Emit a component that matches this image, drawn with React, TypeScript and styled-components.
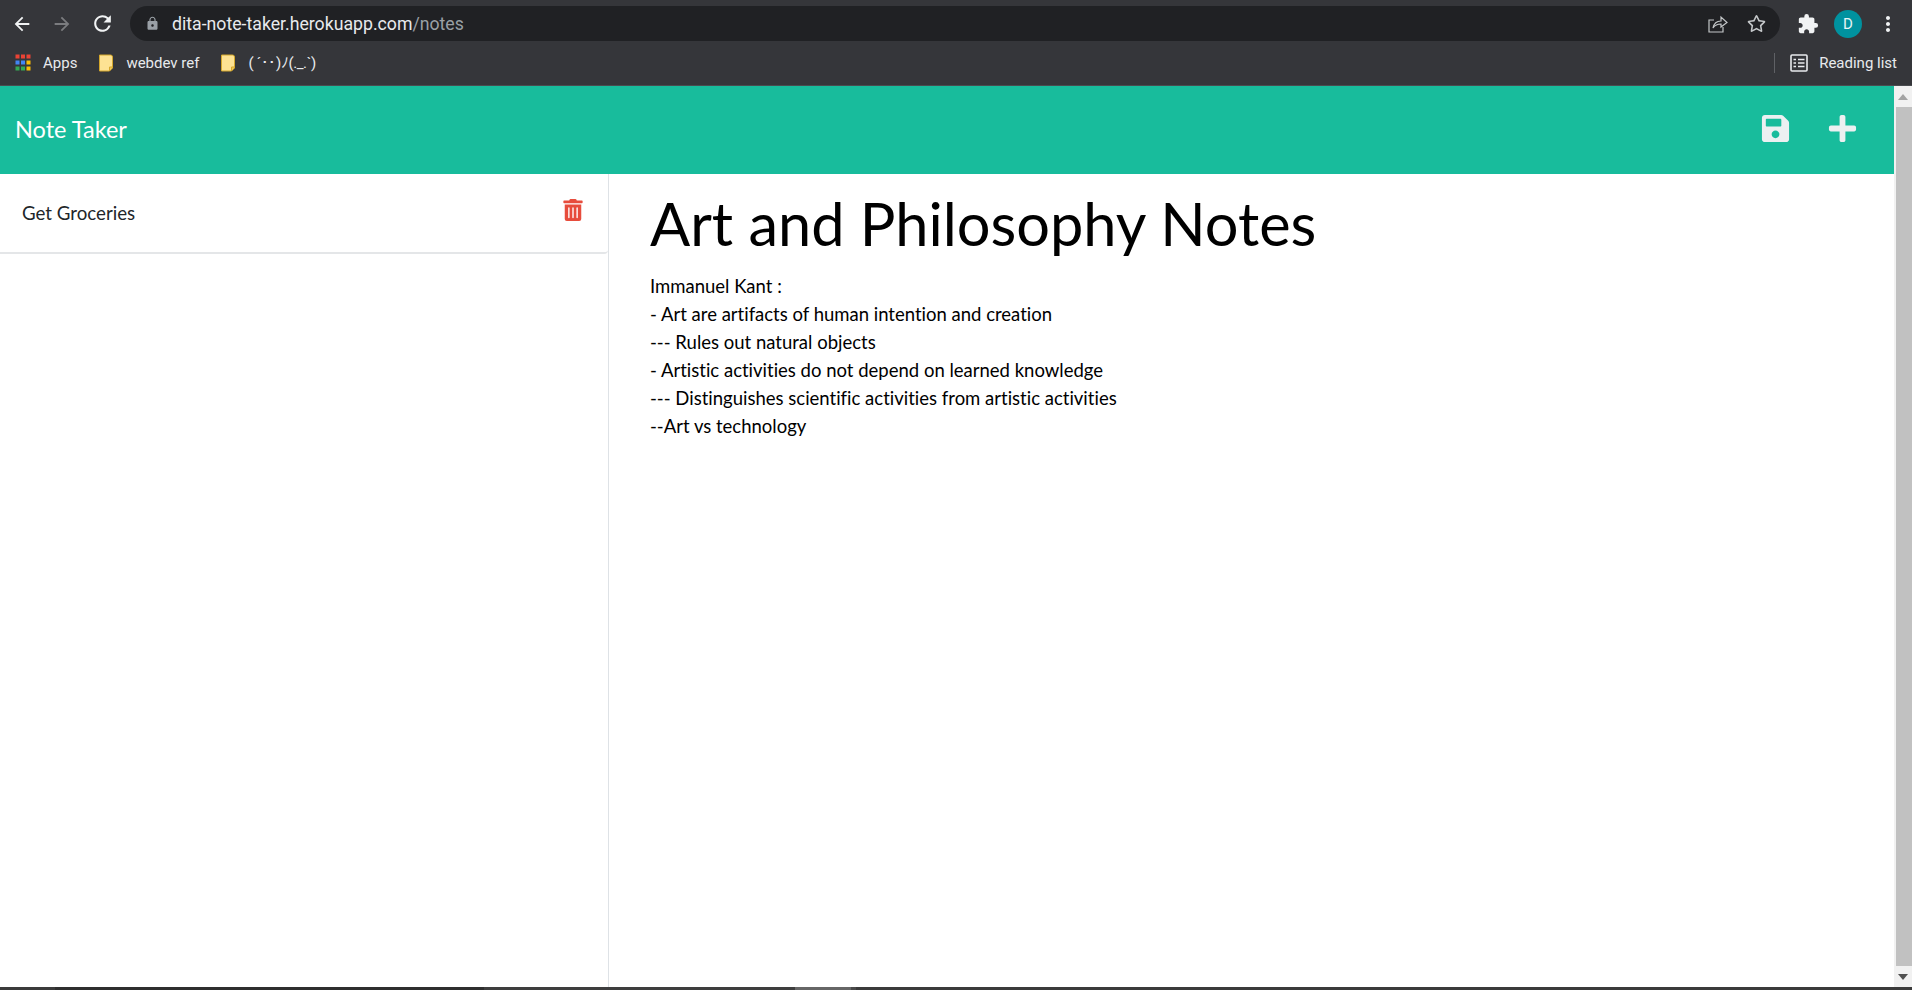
import styled, { createGlobalStyle } from "styled-components";
import { FaPlus, FaRegStar, FaSave, FaTrashAlt } from "react-icons/fa";
import { MdArrowBack, MdArrowForward, MdExtension, MdLock, MdMoreVert, MdRefresh } from "react-icons/md";

const GlobalStyle = createGlobalStyle`
    html, body {
        margin: 0;
        height: 100%;
        overflow: hidden;
        background: #fff;
    }
    body {
        font-family: "Lato", "Noto Sans", sans-serif;
    }
`;

const Screen = styled.div`
    width: 1912px;
    height: 990px;
    display: flex;
    flex-direction: column;
`;

// browser chrome
const Toolbar = styled.div`
    height: 47px;
    flex: none;
    display: flex;
    align-items: center;
    background: #35363a;
    padding: 0 0 0 2px;
`;

const NavIcon = styled.div<{ $dim?: boolean; $left?: number }>`
    width: 40px;
    height: 40px;
    flex: none;
    margin-left: ${(p) => p.$left ?? 0}px;
    display: flex;
    align-items: center;
    justify-content: center;
    color: ${(p) => (p.$dim ? "#7b7c7f" : "#f1f3f4")};
`;

const UrlBar = styled.div`
    margin-left: 8px;
    width: 1650px;
    height: 35px;
    flex: none;
    background: #202124;
    border-radius: 18px;
    display: flex;
    align-items: center;
    padding: 0 4px 0 15px;
    box-sizing: border-box;
    font-family: "Roboto", sans-serif;
    font-size: 17.7px;
    color: #e8eaed;
`;

const UrlText = styled.span`
    margin-left: 12px;
    flex: 1;
`;

const UrlPath = styled.span`
    color: #9aa0a6;
`;

const UrlAction = styled.div`
    width: 39px;
    display: flex;
    justify-content: center;
    color: #c4c7c9;
`;

const Avatar = styled.div`
    width: 28px;
    height: 28px;
    flex: none;
    margin-left: 6px;
    border-radius: 50%;
    background: #00929f;
    color: #e8f4f5;
    font-family: "Roboto", sans-serif;
    font-size: 15px;
    display: flex;
    align-items: center;
    justify-content: center;
`;

const BookmarkBar = styled.div`
    height: 39px;
    flex: none;
    display: flex;
    align-items: center;
    background: #35363a;
    border-bottom: 1px solid #4a4c50;
    padding: 0 0 7px 15px;
    box-sizing: border-box;
    font-family: "Roboto", sans-serif;
    font-size: 15px;
    color: #e8eaed;
`;

const Bookmark = styled.div<{ $gap: number }>`
    display: flex;
    align-items: center;
    gap: ${(p) => p.$gap}px;
    margin-right: 21px;
`;

const Kaomoji = styled.span`
    letter-spacing: -0.4px;
`;

const ReadingList = styled.div`
    margin-left: auto;
    height: 20px;
    display: flex;
    align-items: center;
    gap: 11px;
    border-left: 1px solid #5f6165;
    padding-left: 15px;
    margin-right: 15px;
`;

// page
const Viewport = styled.div`
    flex: 1;
    min-height: 0;
    display: flex;
`;

const Page = styled.div`
    flex: 1;
    min-width: 0;
    display: flex;
    flex-direction: column;
`;

const Navbar = styled.nav`
    height: 88px;
    flex: none;
    background: #18bc9c;
    display: flex;
    align-items: center;
    padding: 0 38px 0 15px;
    color: #ecf0f1;
`;

const Brand = styled.a`
    font-size: 23.5px;
    color: #fff;
    flex: 1;
    margin-bottom: 2px;
`;

const NavAction = styled.div`
    width: 27px;
    display: flex;
    justify-content: center;
    margin-left: 40px;
    margin-bottom: 3px;

    svg {
        flex: none;
    }
`;

const Columns = styled.div`
    flex: 1;
    min-height: 0;
    display: flex;
`;

const Sidebar = styled.aside`
    width: 608px;
    flex: none;
    border-right: 1px solid #dee2e6;
`;

const NoteRow = styled.div`
    height: 80px;
    box-sizing: border-box;
    display: flex;
    justify-content: space-between;
    padding: 25px 24px 0 22px;
    border-bottom: 2px solid #e4e6e8;
    border-bottom-right-radius: 4px;
    font-size: 18.7px;
    line-height: 28px;
    color: #212529;
`;

const TrashIcon = styled.div`
    color: #e74c3c;
    display: flex;
    height: 22px;
`;

const Editor = styled.main`
    flex: 1;
    padding: 14px 0 0 41px;
    color: #000;
`;

const NoteTitle = styled.h1`
    margin: 0 0 14px;
    font-size: 59.5px;
    font-weight: 400;
    line-height: 70px;
`;

const NoteBody = styled.div`
    font-size: 18.5px;
    line-height: 28px;
    white-space: pre-line;
    font-variant-ligatures: none;
`;

const Scrollbar = styled.div`
    width: 18px;
    flex: none;
    background: #f1f1f1;
    display: flex;
    flex-direction: column;
    align-items: flex-end;
`;

const ScrollButton = styled.div`
    height: 21px;
    width: 100%;
    flex: none;
    display: flex;
    align-items: center;
    justify-content: center;
`;

const ScrollThumb = styled.div`
    flex: 1;
    width: 16px;
    background: #c1c1c1;
`;

const BottomStrip = styled.div`
    height: 3px;
    flex: none;
    display: flex;
    background: #3b3b3b;
`;

const StripPart = styled.div<{ $width: number; $color: string }>`
    width: ${(p) => p.$width}px;
    background: ${(p) => p.$color};
    flex: none;
`;

const AppsIcon = () => {
    const colors = ["#ea4335", "#ea4335", "#ea4335", "#4285f4", "#4285f4", "#fbbc04", "#34a853", "#34a853", "#fbbc04"];
    return (
        <svg width="16" height="17" viewBox="0 0 16 17">
            {colors.map((c, i) => (
                <rect key={i} x={(i % 3) * 5.5 + 0.5} y={Math.floor(i / 3) * 6 + 0.5} width="4" height="4" fill={c} />
            ))}
        </svg>
    );
};

const NoteIcon = () => (
    <svg width="16" height="18" viewBox="0 0 16 18">
        <path d="M1.5 1 H12.5 Q14.5 1 14.5 3 V14 L11.5 17 H1.5 Z" fill="#fde293" stroke="#d4a72c" />
        <path d="M14.5 13 H11.5 V17" fill="#f7cb4d" stroke="#d4a72c" />
    </svg>
);

const ShareIcon = () => (
    <svg width="20" height="18" viewBox="0 0 20 18" fill="none" stroke="currentColor" strokeWidth="1.2">
        <path d="M6 5 H1 V17 H15 V12" />
        <path d="M5 13 C6 8 9 6 13 6 V2 L19 7.5 L13 12 V9 C10 9 7 10 5 13 Z" />
    </svg>
);

const ReadingListIcon = () => (
    <svg width="18" height="18" viewBox="0 0 18 18" fill="none" stroke="#e8eaed" strokeWidth="1.6">
        <rect x="1" y="1" width="16" height="16" rx="1" />
        <path d="M3.5 5.5 H6 M8 5.5 H14.5 M3.5 9 H6 M8 9 H14.5 M3.5 12.5 H6 M8 12.5 H14.5" />
    </svg>
);

const notes = `Immanuel Kant :
- Art are artifacts of human intention and creation
--- Rules out natural objects
- Artistic activities do not depend on learned knowledge
--- Distinguishes scientific activities from artistic activities
--Art vs technology`;

export default function App() {
    return (
        <Screen>
            <GlobalStyle />
            <Toolbar>
                <NavIcon><MdArrowBack size={22} /></NavIcon>
                <NavIcon $dim><MdArrowForward size={22} /></NavIcon>
                <NavIcon><MdRefresh size={25} /></NavIcon>
                <UrlBar>
                    <MdLock size={15} color="#9aa0a6" />
                    <UrlText>dita-note-taker.herokuapp.com<UrlPath>/notes</UrlPath></UrlText>
                    <UrlAction><ShareIcon /></UrlAction>
                    <UrlAction><FaRegStar size={19} /></UrlAction>
                </UrlBar>
                <NavIcon $left={8}><MdExtension size={22} /></NavIcon>
                <Avatar>D</Avatar>
                <NavIcon $left={6}><MdMoreVert size={24} /></NavIcon>
            </Toolbar>
            <BookmarkBar>
                <Bookmark $gap={12}><AppsIcon />Apps</Bookmark>
                <Bookmark $gap={12}><NoteIcon />webdev ref</Bookmark>
                <Bookmark $gap={12}><NoteIcon /><Kaomoji>{"( ´･･)ﾉ(._.`)"}</Kaomoji></Bookmark>
                <ReadingList><ReadingListIcon />Reading list</ReadingList>
            </BookmarkBar>
            <Viewport>
                <Page>
                    <Navbar>
                        <Brand>Note Taker</Brand>
                        <NavAction><FaSave size={31} /></NavAction>
                        <NavAction><FaPlus size={31} /></NavAction>
                    </Navbar>
                    <Columns>
                        <Sidebar>
                            <NoteRow>
                                Get Groceries
                                <TrashIcon><FaTrashAlt size={22} /></TrashIcon>
                            </NoteRow>
                        </Sidebar>
                        <Editor>
                            <NoteTitle>Art and Philosophy Notes</NoteTitle>
                            <NoteBody>{notes}</NoteBody>
                        </Editor>
                    </Columns>
                </Page>
                <Scrollbar>
                    <ScrollButton>
                        <svg width="10" height="6" viewBox="0 0 10 6"><path d="M5 0 L10 6 H0 Z" fill="#a3a3a3" /></svg>
                    </ScrollButton>
                    <ScrollThumb />
                    <ScrollButton>
                        <svg width="10" height="6" viewBox="0 0 10 6"><path d="M0 0 H10 L5 6 Z" fill="#505050" /></svg>
                    </ScrollButton>
                </Scrollbar>
            </Viewport>
            <BottomStrip>
                <StripPart $width={55} $color="#3b3b3b" />
                <StripPart $width={429} $color="#2f2f2f" />
                <StripPart $width={311} $color="#3e3e3e" />
                <StripPart $width={56} $color="#666666" />
                <StripPart $width={5} $color="#4a4a4a" />
            </BottomStrip>
        </Screen>
    );
}
